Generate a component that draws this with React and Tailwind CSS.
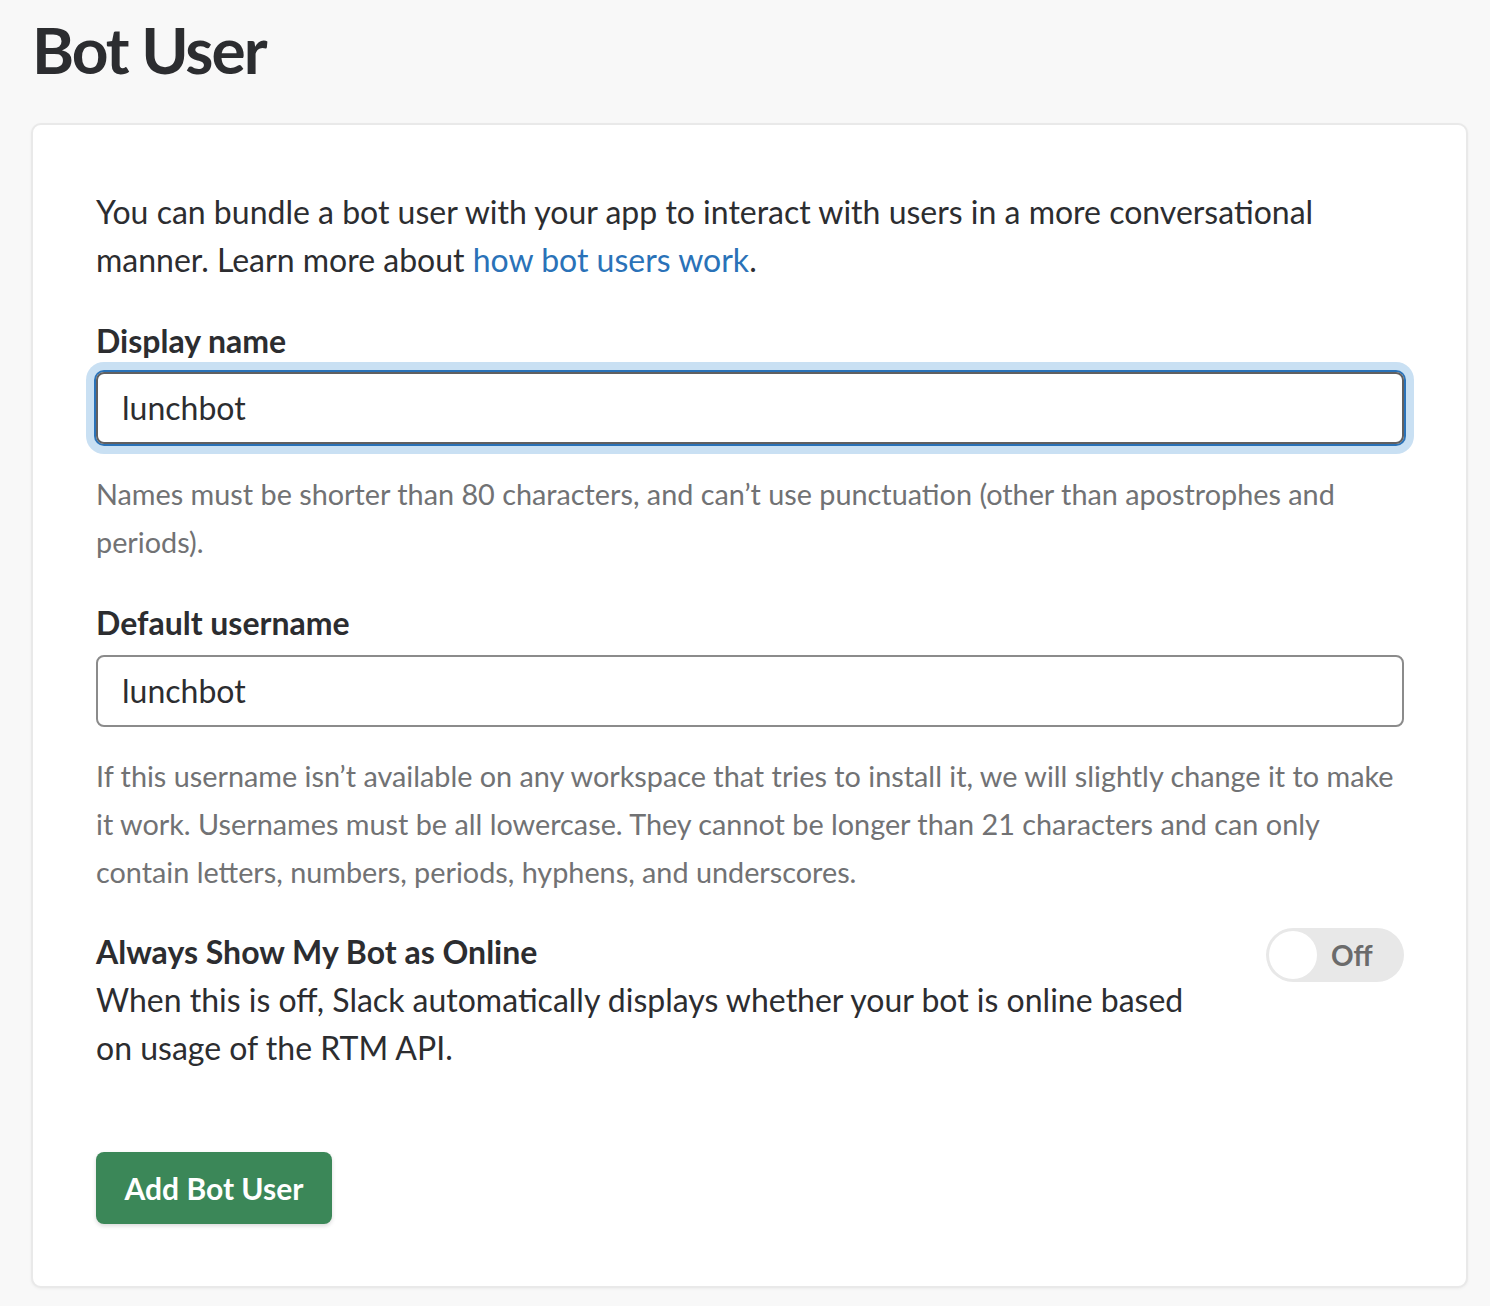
import React from "react";

export default function App() {
  const font = { fontFamily: "Lato, 'Noto Sans', sans-serif" };
  return (
    <div className="min-h-[1306px] w-[1490px] bg-[#f8f8f8] pl-[31px] pr-[22px] pt-[11px] pb-[16px] text-[#2c2d30]" style={font}>
      <h1 className="ml-[1px] text-[64px] font-bold leading-[77px] tracking-[-2px] text-[#2c2d30]">Bot User</h1>
      <div className="mt-[35px] rounded-[10px] border-2 border-[#e9e9e9] bg-white pl-[63px] pr-[62px] pt-[63px] pb-[62px] shadow-[0_1px_3px_rgba(0,0,0,0.05)]">
        <p className="text-[32px] leading-[48px]">
          You can bundle a bot user with your app to interact with users in a more conversational manner. Learn more about <a className="text-[#2a72b8]">how bot users work</a>.
        </p>

        <label className="mt-[39px] block text-[32px] font-bold leading-[36px]">Display name</label>
        <div className="mt-[13px] flex h-[72px] items-center rounded-[8px] border-2 border-[#616061] pl-[24px] text-[32px] shadow-[0_0_0_2px_#2a72b8,0_0_0_10px_#c9e0f3]">
          lunchbot
        </div>
        <p className="mt-[26px] text-[28.8px] leading-[48px] text-[#717274]">
          Names must be shorter than 80 characters, and can’t use punctuation (other than apostrophes and periods).
        </p>

        <label className="mt-[39px] block text-[32px] font-bold leading-[36px]">Default username</label>
        <div className="mt-[14px] flex h-[72px] items-center rounded-[8px] border-2 border-[#8b8b8b] pl-[24px] text-[32px]">
          lunchbot
        </div>
        <p className="mt-[25px] text-[28.8px] leading-[48px] text-[#717274]">
          If this username isn’t available on any workspace that tries to install it, we will slightly change it to make it work. Usernames must be all lowercase. They cannot be longer than 21 characters and can only contain letters, numbers, periods, hyphens, and underscores.
        </p>

        <div className="mt-[32px] flex items-start justify-between">
          <div className="w-[1110px]">
            <div className="text-[32px] font-bold leading-[48px]">Always Show My Bot as Online</div>
            <div className="text-[32px] leading-[48px]">
              When this is off, Slack automatically displays whether your bot is online based on usage of the RTM API.
            </div>
          </div>
          <div className="flex h-[54px] w-[138px] items-center rounded-full bg-[#e8e8e8] p-[3px]">
            <div className="h-[48px] w-[48px] rounded-full bg-white" />
            <span className="ml-[14px] text-[28px] font-bold text-[#6b6b6b]">Off</span>
          </div>
        </div>

        <button className="mt-[80px] flex h-[72px] w-[236px] items-center justify-center rounded-[8px] bg-[#3b8758] text-[30px] font-bold text-white shadow-[0_2px_4px_rgba(0,0,0,0.15)]">
          Add Bot User
        </button>
      </div>
    </div>
  );
}
